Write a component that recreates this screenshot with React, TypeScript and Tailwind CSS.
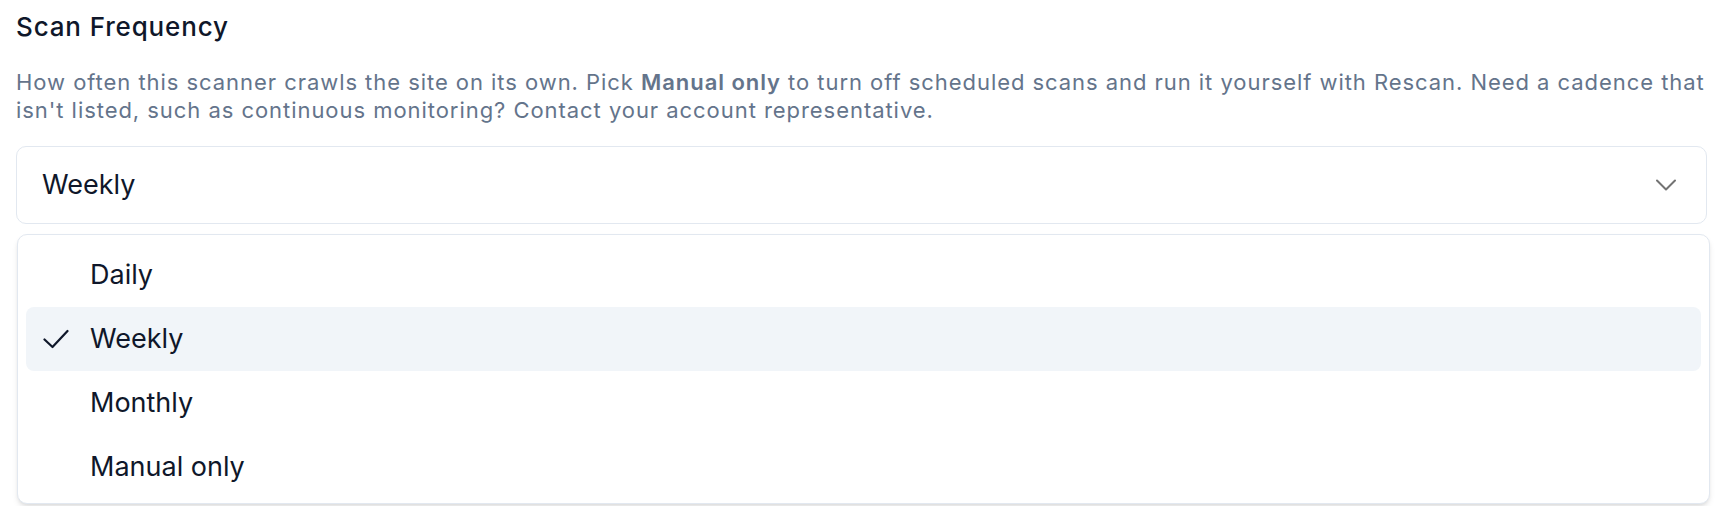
import React from "react";

const items = ["Daily", "Weekly", "Monthly", "Manual only"];

export default function App() {
  return (
    <div
      className="w-[1724px] h-[506px] overflow-hidden bg-white pl-[16px] pr-[17px] pt-[9px]"
      style={{ fontFamily: "Inter, 'Noto Sans', sans-serif" }}
    >
      <div className="text-[26px] leading-[36px] font-medium tracking-[0.85px] text-[#0f172a]">Scan Frequency</div>
      <p className="mt-[23px] text-[22px] leading-[28px] tracking-[0.95px] text-[#64748b]">
        How often this scanner crawls the site on its own. Pick{" "}
        <span className="font-semibold">Manual only</span> to turn off scheduled scans and run it yourself with
        Rescan. Need a cadence that isn't listed, such as continuous monitoring? Contact your account
        representative.
      </p>
      <div className="relative mt-[22px]">
        <div className="h-[78px] rounded-[10px] border border-[#e2e8f0] flex items-center justify-between pl-[25px] pr-[30px]">
          <span className="text-[27px] text-[#0f172a]">Weekly</span>
          <svg width="20" height="12" viewBox="0 0 20 12" fill="none" className="text-[#737373]">
            <path d="M1 1.5 10 10.5 19 1.5" stroke="currentColor" strokeWidth="2" strokeLinecap="round" strokeLinejoin="round" />
          </svg>
        </div>
        <div className="absolute left-[1px] right-[-3px] top-[88px] h-[270px] rounded-[10px] border border-[#e2e8f0] bg-white shadow-md p-[8px]">
          {items.map((it) => (
            <div
              key={it}
              className={
                "h-[64px] rounded-[8px] flex items-center " + (it === "Weekly" ? "bg-[#f1f5f9]" : "")
              }
            >
              <div className="w-[64px] flex justify-start pl-[17px]">
                {it === "Weekly" && (
                  <svg width="26" height="20" viewBox="0 0 26 20" fill="none" className="text-[#0f172a]">
                    <path d="M1.5 10.5 9.5 18 24.5 2" stroke="currentColor" strokeWidth="2.2" strokeLinecap="round" strokeLinejoin="round" />
                  </svg>
                )}
              </div>
              <span className="text-[27px] text-[#0f172a]">{it}</span>
            </div>
          ))}
        </div>
      </div>
    </div>
  );
}
